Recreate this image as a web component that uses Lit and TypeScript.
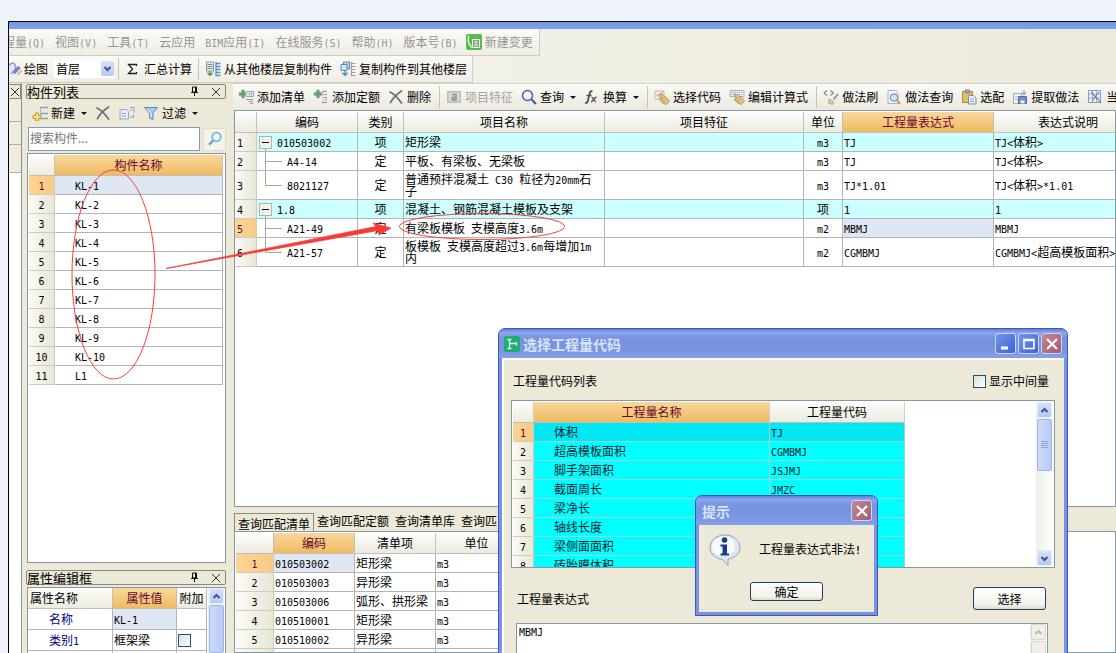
import { LitElement, html, css, svg, nothing } from "lit";
import { customElement } from "lit/decorators.js";
import { classMap } from "lit/directives/class-map.js";

/* Latin runs are set in a half-width face so that they take half a CJK cell each. */
const t = (s: string) =>
  s.split(/([\x20-\x7e]+)/).filter(Boolean).map((p) =>
    /^[\x20-\x7e]/.test(p) ? html`<span class="lat">${p}</span>` : p
  );

const icon = (body: unknown, w = 16, h = 16) =>
  html`<svg class="ic" width=${w} height=${h} viewBox="0 0 ${w} ${h}" fill="none" aria-hidden="true">${body}</svg>`;

const plus = svg`<path d="M3.500 1h3v2.500h2.500v3H6.500V9h-3V6.500H1v-3h2.500z" fill="#5fa06c" stroke="#8cbf95" stroke-width=".6"/>`;
const hand = svg`<path d="M5 5l3 .5 5 3.500 2.500 3-3 3.500-4-1.500L5 10.500l2-1.200z" fill="#e3c184" stroke="#b08c4e" stroke-width=".8"/><path d="M7 8l4 3M6.500 10.500l4 2.500" stroke="#b08c4e" stroke-width=".7"/>`;

const I = {
  addList: icon(svg`${plus}<path d="M8 2.500h7.500v5H8z" fill="#eef1f6" stroke="#9aa6ba"/><path d="M9 5h6M11.500 3v4M13.500 3v4" stroke="#a9b4c5" stroke-width=".8"/><path d="M8 10.500h7M10.500 12.500H15M12 14.500h3" stroke="#9a9a9a"/>`),
  addQuota: icon(svg`${plus}<path d="M9 2.500h5M11 5.500h3M11 8.500h3M9 13.500h5M12 11h2" stroke="#8d9299" stroke-width="1.200"/><path d="M10 3v10" stroke="#c3c8d0"/>`),
  del: icon(svg`<path d="M2 3c4 2 8 6 11.500 11M13.500 2C9 5 5 9 2.500 13.500" stroke="#70737a" stroke-width="1.800" stroke-linecap="round"/>`),
  feature: icon(svg`<path d="M1 2h14v12H1z" fill="#bcbcb8"/><path d="M2.500 3.500h11v9h-11z" fill="#d9d9d5"/><path d="M6 5.500h4v5.500H6.500V8.500H10" stroke="#8c8c88" stroke-width="1.500"/>`),
  find: icon(svg`<circle cx="6.500" cy="6.500" r="5" fill="#f4f6ff" stroke="#4c5fa8" stroke-width="1.500"/><path d="M10.500 10.500l4.500 4.500" stroke="#4c4f92" stroke-width="2"/>`),
  fx: icon(svg`<path d="M8.500 2.500c-2-1-2.500.5-3 2.500l-1.700 7c-.4 1.800-1.500 2.300-2.600 1.500M2.500 6.500h5" stroke="#4a4d52" stroke-width="1.700"/><path d="M7.500 8.500c2-1 2.500 5 4.500 4M12.500 8c-2 .2-3.500 4.500-5.500 4.800" stroke="#4a4d52" stroke-width="1.400"/>`),
  pick: icon(svg`<path d="M1 2h9v8H1z" fill="#f6ecec" stroke="#c9b4b4"/><path d="M2.500 5.500l2 2 4.500-5" stroke="#c97a7a"/>${hand}`),
  edit: icon(svg`<path d="M1 1.500h14v6H1z" fill="#e5eaf5" stroke="#a5b1cc"/><path d="M2 3.500h12M2 5.500h12" stroke="#9aa7c6" stroke-dasharray="1 1"/>${hand}`),
  brush: icon(svg`<path d="M4 1.500L1 4 4 6.500M7.500 1.500l3 2.500-3 2.500" stroke="#7e8494" stroke-width="1.100"/><path d="M15 5l-4.500 5.500" stroke="#9aa0a8" stroke-width="2"/><path d="M6 10l5 3-1.500 2.500L5.500 14z" fill="#d9cf9f" stroke="#a89c66" stroke-width=".7"/>`),
  query: icon(svg`<path d="M2 1.500h7.500L12 4v10.500H2z" fill="#f7f9fc" stroke="#a4b0c2"/><circle cx="8" cy="8.500" r="3.700" fill="#cfe2f3" stroke="#7c93b4" stroke-width="1.200"/><path d="M10.700 11.200l3.500 3.600" stroke="#c8935c" stroke-width="1.800"/>`),
  match: icon(svg`<path d="M1.500 2.500h10v11h-10z" fill="#e3bf6c" stroke="#a98440"/><path d="M4.500 1h4v3h-4z" fill="#b9b9b9" stroke="#777"/><path d="M7.500 6.500h5l2.500 2.500v6H7.500z" fill="#edf2fa" stroke="#7d8ead"/><path d="M9 10h4M9 12.500h4" stroke="#8ea0bd"/>`),
  extract: icon(svg`<path d="M1.500 4.500h8v10h-8z" fill="#f4f6fa" stroke="#a4abba"/><path d="M3 8h4M3 10.500h4" stroke="#a9b2c5"/><path d="M6.500 7.500h8v7h-8z" fill="#6f8fca" stroke="#4f6ba3"/><path d="M8.500 11.500h4v3h-4z" fill="#edf1fa"/><path d="M12 1v4M10 3.500L12 6l2-2.500" stroke="#7887a3"/>`),
  cur: icon(svg`<path d="M1.500 1.500h12v12h-12z" fill="#eef2fb" stroke="#8899c0"/><path d="M2 5h11M2 9h11M5.500 2v11M9.500 2v11" stroke="#9fafd0"/><path d="M4 3l10 11M12 3l-7 9" stroke="#7486b4" stroke-width="1.200"/>`),
  copyFrom: icon(svg`<path d="M1.500 1h7v9h-7z" fill="#e8ebf0" stroke="#8b929e"/><path d="M2.500 3.500h5M2.500 5.500h5M2.500 7.500h5" stroke="#7c8490"/><path d="M11 1v14M11 2.500h4.500M11 5.500h4.500M11 8.500h4.500M11 11.500h4.500M11 14.500h4.500" stroke="#5b8ed0" stroke-width="1.300"/><path d="M5 10v3.500M3 12.500l2 2 2-2z" stroke="#4ea263" stroke-width="1.300" fill="#4ea263"/>`),
  copyTo: icon(svg`<path d="M3.500 1h6v7h-6z" fill="#b4d2ee" stroke="#5c87b4"/><path d="M1 3.500h6v6H1z" fill="#d3e4f4" stroke="#5c87b4"/><path d="M11.500 1v14M11.500 2.500h4M11.500 5.500h4M11.500 8.500h4M11.500 11.500h4M11.500 14.500h4" stroke="#97a0ab" stroke-width="1.200"/><path d="M5 10v3.500M3 12.500l2 2 2-2z" stroke="#4f9fb4" stroke-width="1.300" fill="#5fb3a0"/>`),
  draw: icon(svg`<path d="M0 4c3-3 6-2 6.500 1s-1 6-5 8" fill="#dfe6f8" stroke="#8594c8" stroke-width="1.300"/><path d="M10.500 6l-6 6" stroke="#6f88cc" stroke-width="3.500"/><path d="M8.500 14l4-4.500" stroke="#e2b64f" stroke-width="1.600"/>`, 13, 16),
  create: icon(svg`<path d="M8 2.500h8M8 8.500h8M6 13.500h10" stroke="#86a0c2" stroke-width="1.400"/><path d="M8.500 2v9" stroke="#9fb4cf"/><path d="M3.500 8h3v2.500H9v3H6.500V16h-3v-2.500H1v-3h2.500z" fill="#f6dc7f" stroke="#c2973a"/>`),
  dup: icon(svg`<path d="M1 4.500h6.500l2 2V14H1z" fill="#e5ebf8" stroke="#93a7d1"/><path d="M3 8.500h4M3 11h4" stroke="#93a7d1"/><path d="M11 2.500h4v5M11 12h3.500V9.500M11 5h2" stroke="#8ea4d0" stroke-width="1.200"/>`),
  filter: icon(svg`<path d="M1.500 2.500h13L10 8v6.500L6.500 13V8z" fill="#a9c9f2" stroke="#5d8ac8"/><path d="M4 4l4 4v4" stroke="#e9f3ff"/>`),
  search: icon(svg`<circle cx="9.500" cy="6" r="4.300" stroke="#78b4dd" stroke-width="1.800" fill="#f1faff"/><path d="M6.300 9.300L2 13.800" stroke="#5f9fd0" stroke-width="2.200"/>`),
  leaf: icon(svg`<rect x="0" y="0" width="16" height="16" rx="2" fill="#5cb84a"/><path d="M3 1.500c-2 5 0 9 3 12" stroke="#dff5d6" stroke-width="1.500"/><path d="M6.500 5.500h7v8h-7z" stroke="#eefbe8" fill="#79a878"/><path d="M8 8h4M8 11h4M10 6.500v6" stroke="#eefbe8" stroke-width=".8"/>`),
  pin: icon(svg`<path d="M2.500 1h4v5h-4zM5.500 1v5M1 6.500h7M4.500 7v3" stroke="#111"/>`, 9, 11),
  close: icon(svg`<path d="M1 1l8 8M9 1L1 9" stroke="#333"/>`, 10, 10),
  up: icon(svg`<path d="M1.500 6l3-3 3 3" stroke="currentColor" stroke-width="2"/>`, 9, 9),
  down: icon(svg`<path d="M1.500 3l3 3 3-3" stroke="currentColor" stroke-width="2"/>`, 9, 9),
  app: icon(svg`<rect width="16" height="16" rx="2" fill="#1fae70"/><path d="M5.500 3v10M3.500 3.500h4M3.500 12.500h4M6 7.500h6.500M12.500 6v3.500" stroke="#e9fff5" stroke-width="1.300"/>`),
  info: icon(svg`<path d="M16 1C7.500 1 1 6.500 1 13.500c0 6.500 5.500 11.200 12.500 12l5.500 6v-6.200c7-1.300 12-5.800 12-11.800C31 6.500 24.500 1 16 1z" fill="#dbe7f3" stroke="#94a1b0"/><path d="M15 2.500C8.500 2.500 3 7 3 12.500S8 22 14 22s12-3 12-9S21.500 2.500 15 2.500z" fill="#fff" opacity=".8"/><circle cx="15.500" cy="6" r="2.800" fill="#173a8c"/><path d="M11.500 10.500h6.500v9h2V21.500h-8.500v-2h2v-7h-2z" fill="#173a8c"/>`, 32, 33),
};

interface Bill { n: number; h: number; code: string; kind: string; name: string; unit: string; expr: string; note: string; parent?: boolean; last?: boolean; sel?: boolean; }

const BILLS: Bill[] = [
  { n: 1, h: 19, code: "010503002", kind: "项", name: "矩形梁", unit: "m3", expr: "TJ", note: "TJ<体积>", parent: true },
  { n: 2, h: 19, code: "A4-14", kind: "定", name: "平板、有梁板、无梁板", unit: "m3", expr: "TJ", note: "TJ<体积>" },
  { n: 3, h: 29, code: "8021127", kind: "定", name: "普通预拌混凝土 C30 粒径为20mm石子", unit: "m3", expr: "TJ*1.01", note: "TJ<体积>*1.01", last: true },
  { n: 4, h: 19, code: "1.8", kind: "项", name: "混凝土、钢筋混凝土模板及支架", unit: "项", expr: "1", note: "1", parent: true },
  { n: 5, h: 19, code: "A21-49", kind: "定", name: "有梁板模板 支模高度3.6m", unit: "m2", expr: "MBMJ", note: "MBMJ", sel: true },
  { n: 6, h: 29, code: "A21-57", kind: "定", name: "板模板 支模高度超过3.6m每增加1m内", unit: "m2", expr: "CGMBMJ", note: "CGMBMJ<超高模板面积>", last: true },
];
const MEMBERS = ["KL-1", "KL-2", "KL-3", "KL-4", "KL-5", "KL-6", "KL-7", "KL-8", "KL-9", "KL-10", "L1"];
const MATCHES = [["010503002", "矩形梁"], ["010503003", "异形梁"], ["010503006", "弧形、拱形梁"], ["010510001", "矩形梁"], ["010510002", "异形梁"]];
const CODES = [["体积", "TJ"], ["超高模板面积", "CGMBMJ"], ["脚手架面积", "JSJMJ"], ["截面周长", "JMZC"], ["梁净长", ""], ["轴线长度", ""], ["梁侧面面积", ""], ["砖胎膜体积", ""]];
const MENU = ["程量(Q)", "视图(V)", "工具(T)", "云应用", "BIM应用(I)", "在线服务(S)", "帮助(H)", "版本号(B)"];

@customElement("app-root")
export class AppRoot extends LitElement {
  static styles = css`
    :host { display: block; }
    * { box-sizing: border-box; }
    .page, button, input, select, textarea { font: 12px/12px "Noto Sans CJK SC", sans-serif; color: #000; }
    .page { position: relative; height: 100vh; padding: 21px 0 0 8px; background: #edf2fb; overflow: hidden; }
    button { border: 0; padding: 0; margin: 0; background: none; white-space: nowrap; }
    input, select, textarea { margin: 0; border-radius: 0; }
    .lat { font-family: "DejaVu Sans Mono", monospace; font-size: 10px; line-height: 0; white-space: pre-wrap; }
    .ic { display: block; flex: none; }
    .frame { height: 100%; border: solid #000; border-width: 1px 0 0 1px; background: #ece9d8; display: flex; flex-direction: column; overflow: hidden; }
    .caption { flex: none; height: 7px; background: linear-gradient(#6f97e2, #82a3ea); }
    .band { flex: none; height: 27px; display: flex; background: linear-gradient(90deg, #f6f5f0, #eceadb); }
    .group { display: flex; align-items: center; border: solid #d0cdbf; border-width: 0 1px 1px 0; background: linear-gradient(#fafaf7, #efede3); }
    .menu { gap: 10px; margin-left: -6px; padding-right: 6px; }
    .menu button { color: #96968f; }
    .menu .change { display: flex; align-items: center; gap: 3px; margin-left: -2px; }
    .tool { display: flex; align-items: center; gap: 3px; flex: none; }
    .tool.off { color: #a5a49a; }
    .quick { padding-right: 5px; }
    .quick .plot { gap: 2px; }
    .quick .wide { gap: 3px; }
    .quick .wide + .wide { margin-left: 8px; }
    .quick .wide-bar { margin: 0 6px; }
    .combo { position: relative; margin: 0 4px 0 6px; width: 60px; height: 18px; }
    .combo select { width: 100%; height: 100%; border: 0; padding: 0 2px; background: #fff; appearance: none; outline: 0; line-height: 18px; }
    .combo span { position: absolute; right: 0; top: 1px; width: 13px; height: 15px; }
    .drop { display: grid; place-items: center; background: linear-gradient(#d6e2fb, #b4c9f4); color: #3c5585; border-radius: 2px; pointer-events: none; }
    .bar { width: 1px; height: 22px; background: #c9c4ae; flex: none; }
    .caret { border: 3px solid transparent; border-top-color: #111; border-bottom: 0; margin-left: 3px; }
    .work { flex: 1; min-height: 0; display: flex; }

    .strip { width: 13px; flex: none; display: flex; flex-direction: column; border-right: 1px solid #8c9298; padding-top: 1px; }
    .strip .shut { height: 15px; border: solid #8a8878; border-width: 1px 1px 1px 0; display: grid; place-items: center; }
    .strip i { height: 23px; border-bottom: 1px solid #b5b29e; background: #efecdf; flex: none; }
    .strip i:last-of-type { height: 28px; }
    .strip b { flex: 1; background: #fff; }

    .side { width: 200px; flex: none; margin-left: 4px; display: flex; flex-direction: column; padding-top: 1px; }
    .head { flex: none; height: 15px; display: flex; align-items: center; border: 1px solid #8a8878; border-radius: 2px; padding-right: 4px; font-size: 13px; }
    .head h2 { font: inherit; margin: 0; flex: 1; }
    .head button + button { margin-left: 12px; }
    .row { flex: none; display: flex; align-items: center; }
    .ops { height: 28px; padding: 0 6px; gap: 8px; }
    .find { height: 24px; gap: 3px; padding-left: 2px; margin-bottom: 2px; }
    .find input { flex: 1; min-width: 0; height: 24px; border: 1px solid #7f9db9; padding: 0 1px 4px; outline: 0; }
    .find input::placeholder { color: #77776f; opacity: 1; }
    .find button { width: 23px; height: 23px; display: grid; place-items: center; border: 1px solid #e0dccb; background: #f5f3ea; }
    .box { background: #fff; border: 1px solid #8598a6; margin-left: 1px; overflow: hidden; }
    .grow { flex: 1; min-height: 0; }
    .props { flex: none; height: 66px; display: flex; justify-content: space-between; margin-top: 2px; border-bottom: 0; }
    .gap { flex: none; height: 7px; }

    table { border-collapse: separate; border-spacing: 0; table-layout: fixed; }
    th, td { padding: 0 1px; border: solid #b4b4b4; border-width: 0 1px 1px 0; font-weight: 400; text-align: left; overflow: hidden; }
    thead th { height: 21px; text-align: center; background: linear-gradient(#fdfdfb, #ecebe0); border-color: #c2c0b4; }
    thead th.hot { background: linear-gradient(#f9d79c, #efbb62); color: #6b0430; }
    tbody tr { height: 19px; }
    tbody th { text-align: center; background: linear-gradient(90deg, #fbfaf6, #e8e6d6); border-color: #cfccbc; }
    tbody th.hot { background: linear-gradient(90deg, #fdd394, #f8ca86); color: #6b0430; }
    .mid { text-align: center; }
    .focus { background: #dfe7f5; }
    .list { width: 194px; margin: 1px; }
    .list td { padding-left: 20px; }
    .pt { width: 179px; flex: none; }
    .pt thead th:not(.hot):first-child { text-align: left; padding-left: 2px; }
    .pt tbody tr { height: 21px; }
    .pt tbody th { background: #fff; color: #00008b; text-align: left; padding-left: 21px; border-color: #b4b4b4; }
    .tick { appearance: none; display: block; width: 13px; height: 13px; border: 1px solid #1c5180; background: linear-gradient(135deg, #dcdcd7, #fff); }

    .main { flex: 1; min-width: 0; display: flex; flex-direction: column; margin-left: 7px; }
    .tools { flex: none; height: 27px; gap: 8px; padding-left: 5px; border-top: 1px solid #d5d2c4; background: linear-gradient(#fafaf7, #ebe9dd); overflow: hidden; display: flex; align-items: center; }
    .tools .bar { margin-right: -2px; }
    .bills { width: 908px; margin-top: 1px; }
    .bills tbody th { text-align: left; padding-left: 2px; }
    .bills .group-row td { background: #ccffff; }
    .bills td.code { padding: 0; }
    .node { display: flex; align-items: center; gap: 4px; }
    .lower { flex: none; height: 146px; display: flex; flex-direction: column; padding-top: 6px; }
    .tabs { flex: none; height: 18px; display: flex; gap: 6px; padding-left: 1px; overflow: hidden; }
    .tabs button { padding: 0 0 3px; }
    .tabs .on { padding: 2px 3px 0; margin-right: -3px; border: 1px solid #8c8a7c; border-bottom: 0; }
    .matches { width: 282px; margin: 1px 0 0 1px; }

    .win { position: absolute; border: 1px solid #3f56b8; background: #7a92e2; border-radius: 7px 7px 0 0; padding: 0 3px; display: flex; flex-direction: column; }
    .title { flex: none; height: 29px; display: flex; align-items: center; gap: 2px; margin: 0 -3px; padding: 0 5px; border-radius: 6px 6px 0 0; background: linear-gradient(#5f7edb, #8aa5ec 12%, #7792df 35%, #7b95e2 75%, #86a2ea); }
    .title h2 { font-size: 14px; line-height: 16px; font-weight: 700; color: #d8e4fb; margin: 0 auto 0 1px; }
    .wb { width: 21px; height: 21px; border: 1px solid #c9d6f8; border-radius: 3px; background: linear-gradient(135deg, #7496ee, #3e62d0); display: grid; place-items: center; }
    .wb.x { background: linear-gradient(135deg, #c08a96, #a65a70); }
    .codes-win { left: 498px; top: 328px; width: 570px; height: calc(100% - 324px); }
    .client { flex: 1; min-height: 0; background: #ece9d8; border: solid #fff; border-width: 2px 0 0 2px; display: flex; flex-direction: column; padding: 0 9px 0 6px; }
    .top { flex: none; height: 40px; display: flex; align-items: center; justify-content: space-between; padding: 2px 6px 0 3px; }
    .top label { display: flex; align-items: center; gap: 3px; }
    .cbox { flex: none; height: 168px; display: flex; justify-content: space-between; padding: 1px; }
    .codes { width: 392px; flex: none; align-self: flex-start; }
    .codes thead th { border-right-color: #d3d0c4; }
    .codes td { background: #0ff; border-color: #9bd3d3; color: #123; }
    .codes td.name { padding-left: 20px; }
    .codes .now td { background: #00e8f4; }
    .scroll { width: 17px; flex: none; display: flex; flex-direction: column; align-items: center; background: linear-gradient(90deg, #f0efe8, #fdfdfa); }
    .scroll .drop { width: 15px; height: 16px; border: 1px solid #e6eefc; flex: none; }
    .scroll .drop.off { background: #f0efe8; color: #bdbbb0; border-color: #d8d6ca; }
    .thumb { width: 15px; height: 52px; margin-bottom: auto; margin-top: 1px; border-radius: 2px; border: 1px solid #9fb5e8; background: linear-gradient(90deg, #cddafb, #b9cbf6); display: grid; place-items: center; flex: none; }
    .thumb.long { flex: 1; }
    .thumb.none { border-color: #d8d6ca; background: #f0efe8; }
    .exprline { flex: none; height: 55px; display: flex; align-items: center; justify-content: space-between; padding: 6px 9px 0 7px; }
    .push { border: 1px solid #1c3f6e; border-radius: 3px; background: linear-gradient(#fff, #f3f2ea 80%, #dedbc9); width: 73px; height: 23px; }
    .expr { flex: 1; min-height: 0; display: flex; margin: 0 7px 0 6px; border-bottom: 0; }
    .expr textarea { flex: 1; min-width: 0; resize: none; border: 0; outline: 0; padding: 3px 2px; font-family: "DejaVu Sans Mono", monospace; font-size: 10px; overflow: hidden; }
    .tip { left: 695px; top: 495px; width: 183px; height: 121px; padding-bottom: 3px; }
    .msg { flex: 1; background: #ece9d8; display: flex; flex-direction: column; align-items: center; }
    .say { align-self: stretch; display: flex; align-items: center; gap: 18px; padding: 9px 0 15px 10px; }
    .say p { margin: 0 0 4px; white-space: nowrap; }
    .say .lat { font-weight: 700; }
    .msg .push { height: 19px; }
    .marks { position: absolute; left: 0; top: 0; pointer-events: none; }
  `;

  private tool(ic: unknown, label: string, o: { off?: boolean; menu?: boolean } = {}) {
    return html`<button class=${classMap({ tool: true, off: !!o.off })} ?disabled=${!!o.off}>${ic}${label}${o.menu ? html`<span class="caret"></span>` : nothing}</button>`;
  }

  private node(b: Bill) {
    const h = b.h - 1;
    const m = Math.floor(h / 2);
    return html`<div class="node">${b.parent
      ? icon(svg`<rect x="2.500" y="3.500" width="12" height="12" fill="#f2f1ea" stroke="#a9b5b5"/><path d="M5 9.500h7" stroke="#111"/><path d="M8.500 16v2" stroke="#a5a5a5"/>`, 16, 18)
      : icon(svg`<path d="M8.500 0V${b.last ? m + 0.5 : h}M8.500 ${m + 0.5}H25" stroke="#a5a5a5"/>`, 26, h)}<span>${t(b.code)}</span></div>`;
  }

  private head(title: string) {
    return html`<div class="head"><h2>${title}</h2><button aria-label="固定">${I.pin}</button><button aria-label="关闭">${I.close}</button></div>`;
  }

  private side() {
    return html`<section class="side">
      ${this.head("构件列表")}
      <div class="row ops">${this.tool(I.create, "新建", { menu: true })}<button aria-label="删除">${I.del}</button><button aria-label="复制">${I.dup}</button>${this.tool(I.filter, "过滤", { menu: true })}</div>
      <div class="row find"><input type="text" placeholder="搜索构件..." aria-label="搜索构件" /><button aria-label="搜索">${I.search}</button></div>
      <div class="box grow">
        <table class="list"><colgroup><col width="26" /><col /></colgroup>
          <thead><tr><th></th><th class="hot">构件名称</th></tr></thead>
          <tbody>${MEMBERS.map((m, i) => html`<tr><th class=${i ? "" : "hot"}>${t(String(i + 1))}</th><td class=${i ? "" : "focus"}>${t(m)}</td></tr>`)}</tbody>
        </table>
      </div>
      <div class="gap"></div>
      ${this.head("属性编辑框")}
      <div class="box props">
        <table class="pt"><colgroup><col width="85" /><col width="64" /><col width="30" /></colgroup>
          <thead><tr><th>属性名称</th><th class="hot">属性值</th><th>附加</th></tr></thead>
          <tbody>
            <tr><th>名称</th><td class="focus">${t("KL-1")}</td><td></td></tr>
            <tr><th>${t("类别1")}</th><td>框架梁</td><td><input class="tick" type="checkbox" aria-label="附加" /></td></tr>
            <tr><th></th><td></td><td></td></tr>
          </tbody>
        </table>
        <div class="scroll"><span class="drop">${I.up}</span><span class="thumb long"></span></div>
      </div>
    </section>`;
  }

  private main() {
    return html`<section class="main">
      <div class="tools">
        ${this.tool(I.addList, "添加清单")}${this.tool(I.addQuota, "添加定额")}${this.tool(I.del, "删除")}<span class="bar"></span>
        ${this.tool(I.feature, "项目特征", { off: true })}${this.tool(I.find, "查询", { menu: true })}${this.tool(I.fx, "换算", { menu: true })}<span class="bar"></span>
        ${this.tool(I.pick, "选择代码")}${this.tool(I.edit, "编辑计算式")}<span class="bar"></span>
        ${this.tool(I.brush, "做法刷")}${this.tool(I.query, "做法查询")}${this.tool(I.match, "选配")}${this.tool(I.extract, "提取做法")}${this.tool(I.cur, "当")}
      </div>
      <div class="box grow">
        <table class="bills">
          <colgroup><col width="22" /><col width="101" /><col width="46" /><col width="201" /><col width="199" /><col width="39" /><col width="151" /><col width="149" /></colgroup>
          <thead><tr><th></th><th>编码</th><th>类别</th><th>项目名称</th><th>项目特征</th><th>单位</th><th class="hot">工程量表达式</th><th>表达式说明</th></tr></thead>
          <tbody>${BILLS.map((b) => html`<tr class=${b.parent ? "group-row" : ""} style="height:${b.h}px">
            <th class=${b.sel ? "hot" : ""}>${t(String(b.n))}</th><td class="code">${this.node(b)}</td><td class="mid">${b.kind}</td><td>${t(b.name)}</td><td></td>
            <td class="mid">${t(b.unit)}</td><td class=${b.sel ? "focus" : ""}>${t(b.expr)}</td><td>${t(b.note)}</td></tr>`)}</tbody>
        </table>
      </div>
      <div class="lower">
        <div class="tabs"><button class="on">查询匹配清单</button><button>查询匹配定额</button><button>查询清单库</button><button>查询匹</button></div>
        <div class="box grow">
          <table class="matches"><colgroup><col width="38" /><col width="81" /><col width="81" /><col width="82" /></colgroup>
            <thead><tr><th></th><th class="hot">编码</th><th>清单项</th><th>单位</th></tr></thead>
            <tbody>${MATCHES.map(([c, n], i) => html`<tr><th class=${i ? "" : "hot"}>${t(String(i + 1))}</th><td class=${i ? "" : "focus"}>${t(c)}</td><td>${n}</td><td>${t("m3")}</td></tr>`)}
              <tr><th></th><td></td><td></td><td></td></tr></tbody>
          </table>
        </div>
      </div>
    </section>`;
  }

  private codesWindow() {
    return html`<section class="win codes-win">
      <div class="title">${I.app}<h2>选择工程量代码</h2>
        <button class="wb" aria-label="最小化">${icon(svg`<path d="M3 12h7" stroke="#fff" stroke-width="3"/>`)}</button>
        <button class="wb" aria-label="最大化">${icon(svg`<path d="M3 3.500h10v9H3zM3 4.500h10" stroke="#fff" stroke-width="1.600"/>`)}</button>
        <button class="wb x" aria-label="关闭">${icon(svg`<path d="M3 3l10 10M13 3L3 13" stroke="#fff" stroke-width="2.200"/>`)}</button>
      </div>
      <div class="client">
        <div class="top"><span>工程量代码列表</span><label><input class="tick" type="checkbox" />显示中间量</label></div>
        <div class="box cbox">
          <table class="codes"><colgroup><col width="21" /><col width="236" /><col width="135" /></colgroup>
            <thead><tr><th></th><th class="hot">工程量名称</th><th>工程量代码</th></tr></thead>
            <tbody>${CODES.map(([n, c], i) => html`<tr class=${i ? "" : "now"}><th class=${i ? "" : "hot"}>${t(String(i + 1))}</th><td class="name">${n}</td><td>${t(c)}</td></tr>`)}</tbody>
          </table>
          <div class="scroll"><span class="drop">${I.up}</span><span class="thumb">${icon(svg`<path d="M0 .5h7M0 2.500h7M0 4.500h7M0 6.500h7" stroke="#90a8dc"/>`, 7, 8)}</span><span class="drop">${I.down}</span></div>
        </div>
        <div class="exprline"><label for="expr">工程量表达式</label><button class="push">选择</button></div>
        <div class="box expr"><textarea id="expr" .value=${"MBMJ"}></textarea><div class="scroll"><span class="drop off">${I.up}</span><span class="thumb long none"></span></div></div>
      </div>
    </section>`;
  }

  private tip() {
    return html`<section class="win tip" role="alertdialog" aria-label="提示">
      <div class="title"><h2>提示</h2><button class="wb x" aria-label="关闭">${icon(svg`<path d="M3 3l10 10M13 3L3 13" stroke="#fff" stroke-width="2.200"/>`)}</button></div>
      <div class="msg"><div class="say">${I.info}<p>${t("工程量表达式非法!")}</p></div><button class="push">确定</button></div>
    </section>`;
  }

  render() {
    return html`<div class="page">
      <div class="frame">
        <div class="caption"></div>
        <div class="band"><nav class="group menu">${MENU.map((m) => html`<button>${t(m)}</button>`)}<button class="change">${I.leaf}新建变更</button></nav></div>
        <div class="band"><div class="group quick">
          <button class="tool plot">${I.draw}绘图</button>
          <div class="combo"><select aria-label="楼层"><option>首层</option></select><span class="drop">${I.down}</span></div>
          <span class="bar"></span>
          <button class="tool">${icon(svg`<path d="M17.500 5V3.500h-8L13.500 8l-4 4.500h8V11" stroke="#222" stroke-width="1.300"/>`, 22, 16)}汇总计算</button>
          <span class="bar wide-bar"></span>
          <button class="tool wide">${I.copyFrom}从其他楼层复制构件</button>
          <button class="tool wide">${I.copyTo}复制构件到其他楼层</button>
        </div></div>
        <div class="work">
          <div class="strip"><button class="shut" aria-label="关闭">${I.close}</button><i></i><i></i><i></i><b></b></div>
          ${this.side()}
          ${this.main()}
        </div>
      </div>
      ${this.codesWindow()}
      ${this.tip()}
      <svg class="marks" width="600" height="400" viewBox="0 0 600 400" fill="none" stroke="#f4403c" aria-hidden="true">
        <ellipse cx="113.500" cy="274.500" rx="41.500" ry="104.500"/>
        <ellipse cx="482" cy="226.500" rx="82.500" ry="13"/>
        <path d="M166 268.500L376 226.500L373 223L391 228L379 235L378 230.500z" fill="#f93a36" stroke-width=".8"/>
      </svg>
    </div>`;
  }
}
